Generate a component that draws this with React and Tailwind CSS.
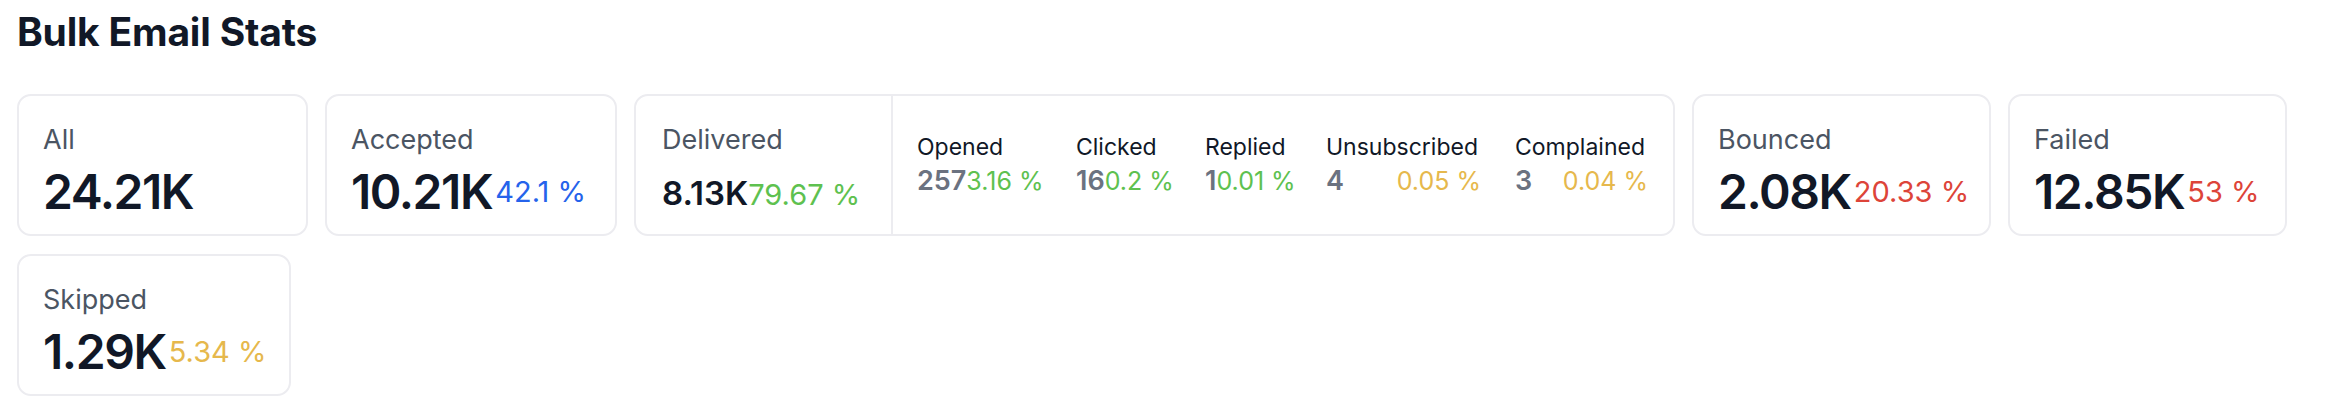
import React from "react";

const FONT = { fontFamily: "Inter, 'Noto Sans', sans-serif" };

function StatCard({ label, value, pct, pctColor, width }) {
  return (
    <div
      className={`h-[142px] shrink-0 rounded-[14px] border-2 border-[#ececf0] bg-white pl-[24px] pt-[26px] ${width}`}
    >
      <div className="text-[27px] leading-[36px] text-[#4b5563]">{label}</div>
      <div className="mt-[10px] flex items-center whitespace-nowrap">
        <span className="text-[48px] font-semibold leading-[48px] tracking-[-0.03em] text-[#111827]">{value}</span>
        {pct && (
          <span className={`ml-[3px] text-[29px] leading-[36px] ${pctColor}`}>{pct}</span>
        )}
      </div>
    </div>
  );
}

function SubStat({ label, value, pct, pctColor, width }) {
  return (
    <div className={`flex flex-col ${width}`}>
      <div className="text-[23px] leading-[28px] text-[#111827] whitespace-nowrap">{label}</div>
      <div className="mt-[4px] flex items-baseline justify-between whitespace-nowrap">
        <span className="flex items-baseline">
          <span className="text-[27px] font-semibold leading-[32px] text-[#6b7280]">{value}</span>
          {pct && <span className={`text-[25px] leading-[32px] ${pctColor}`}>{pct.inline}</span>}
        </span>
        {pct && pct.right && (
          <span className={`text-[25px] leading-[32px] ${pctColor}`}>{pct.right}</span>
        )}
      </div>
    </div>
  );
}

export default function App() {
  return (
    <div className="min-h-[410px] bg-white px-[17px] pt-[8px]" style={FONT}>
      <h1 className="text-[39px] font-bold leading-[48px] tracking-[-0.005em] text-[#111827]">
        Bulk Email Stats
      </h1>
      <div className="mt-[38px] flex flex-wrap gap-x-[17px] gap-y-[18px]">
        <StatCard label="All" value="24.21K" width="w-[291px]" />
        <StatCard
          label="Accepted"
          value="10.21K"
          pct="42.1 %"
          pctColor="text-[#2563eb]"
          width="w-[292px]"
        />
        <div className="flex h-[142px] w-[1041px] shrink-0 rounded-[14px] border-2 border-[#ececf0] bg-white">
          <div className="w-[255px] shrink-0 pl-[26px] pt-[26px]">
            <div className="text-[27px] leading-[36px] text-[#4b5563]">Delivered</div>
            <div className="mt-[17px] flex items-baseline whitespace-nowrap">
              <span className="text-[33px] font-semibold leading-[36px] text-[#111827]">8.13K</span>
              <span className="text-[29px] leading-[36px] text-[#5ec14f]">79.67 %</span>
            </div>
          </div>
          <div className="w-[2px] self-stretch bg-[#ececf0]" />
          <div className="flex flex-1 items-center gap-x-[34px] pl-[24px]">
            <SubStat
              label="Opened"
              value="257"
              pct={{ inline: "3.16 %" }}
              pctColor="text-[#5ec14f]"
              width="w-[125px]"
            />
            <SubStat
              label="Clicked"
              value="16"
              pct={{ inline: "0.2 %" }}
              pctColor="text-[#5ec14f]"
              width="w-[95px]"
            />
            <SubStat
              label="Replied"
              value="1"
              pct={{ inline: "0.01 %" }}
              pctColor="text-[#5ec14f]"
              width="w-[87px]"
            />
            <SubStat
              label="Unsubscribed"
              value="4"
              pct={{ right: "0.05 %" }}
              pctColor="text-[#e6b84c]"
              width="w-[155px]"
            />
            <SubStat
              label="Complained"
              value="3"
              pct={{ right: "0.04 %" }}
              pctColor="text-[#e6b84c]"
              width="w-[133px]"
            />
          </div>
        </div>
        <StatCard
          label="Bounced"
          value="2.08K"
          pct="20.33 %"
          pctColor="text-[#dd4439]"
          width="w-[299px]"
        />
        <StatCard
          label="Failed"
          value="12.85K"
          pct="53 %"
          pctColor="text-[#dd4439]"
          width="w-[279px]"
        />
        <StatCard
          label="Skipped"
          value="1.29K"
          pct="5.34 %"
          pctColor="text-[#e6b84c]"
          width="w-[274px]"
        />
      </div>
    </div>
  );
}
